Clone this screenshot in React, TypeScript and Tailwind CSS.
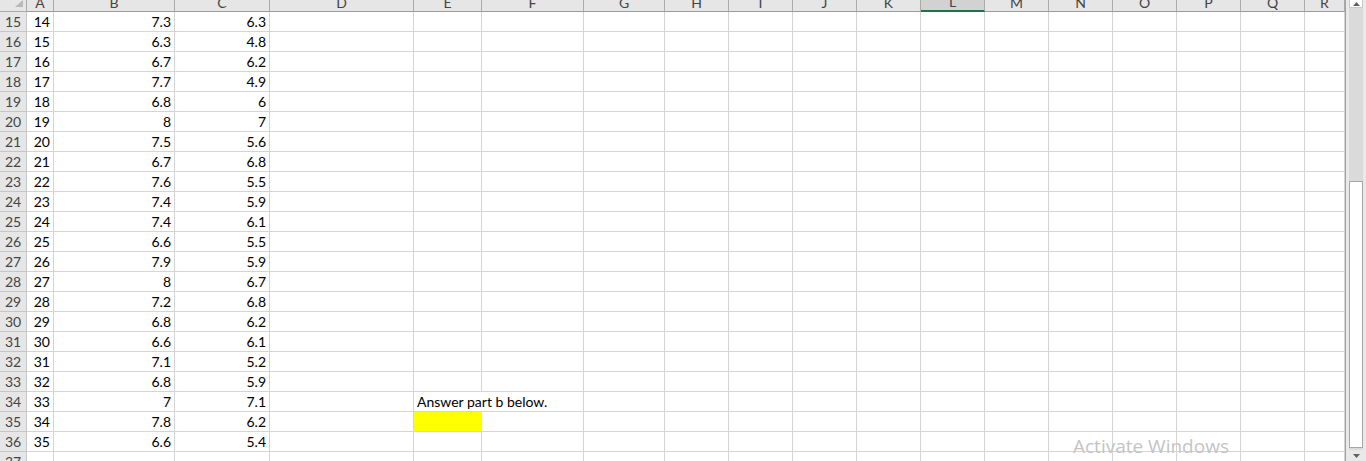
import React from "react";

const columns = [
	{ name: "A", w: "w-[27px]" },
	{ name: "B", w: "w-[121px]" },
	{ name: "C", w: "w-[95px]" },
	{ name: "D", w: "w-[144px]" },
	{ name: "E", w: "w-[68px]" },
	{ name: "F", w: "w-[102px]" },
	{ name: "G", w: "w-[81px]" },
	{ name: "H", w: "w-[64px]" },
	{ name: "I", w: "w-[64px]" },
	{ name: "J", w: "w-[64px]" },
	{ name: "K", w: "w-[64px]" },
	{ name: "L", w: "w-[64px]" },
	{ name: "M", w: "w-[64px]" },
	{ name: "N", w: "w-[64px]" },
	{ name: "O", w: "w-[64px]" },
	{ name: "P", w: "w-[64px]" },
	{ name: "Q", w: "w-[64px]" },
	{ name: "R", w: "w-[40px]" },
];

const data: [number, string, string][] = [
	[14, "7.3", "6.3"],
	[15, "6.3", "4.8"],
	[16, "6.7", "6.2"],
	[17, "7.7", "4.9"],
	[18, "6.8", "6"],
	[19, "8", "7"],
	[20, "7.5", "5.6"],
	[21, "6.7", "6.8"],
	[22, "7.6", "5.5"],
	[23, "7.4", "5.9"],
	[24, "7.4", "6.1"],
	[25, "6.6", "5.5"],
	[26, "7.9", "5.9"],
	[27, "8", "6.7"],
	[28, "7.2", "6.8"],
	[29, "6.8", "6.2"],
	[30, "6.6", "6.1"],
	[31, "7.1", "5.2"],
	[32, "6.8", "5.9"],
	[33, "7", "7.1"],
	[34, "7.8", "6.2"],
	[35, "6.6", "5.4"],
];

function Row({ num, vals }: { num: number; vals?: [number, string, string] }) {
	return (
		<div className="flex h-[20px] shrink-0">
			<div className="w-[27px] shrink-0 bg-[#e6e6e6] border-r border-b border-[#c6c6c6] text-[#444] text-center leading-[19px]">
				{num}
			</div>
			{columns.map((c, i) => {
				let content: React.ReactNode = null;
				let extra = "border-r";
				if (vals && i === 0) content = vals[0];
				if (vals && i === 1) content = vals[1];
				if (vals && i === 2) content = vals[2];
				if (num === 34 && c.name === "E") {
					content = "Answer part b below.";
					extra = "border-r-0 pl-[3px] whitespace-nowrap overflow-visible relative z-10 text-left";
				}
				if (num === 35 && c.name === "E") extra = "border-r-0 bg-[#ffff00]";
				return (
					<div
						key={c.name}
						className={`${c.w} shrink-0 border-b border-[#d4d4d4] ${extra} text-right pr-[3px] leading-[19px] text-black`}
					>
						{content}
					</div>
				);
			})}
		</div>
	);
}

export default function App() {
	return (
		<div
			className="relative w-[1366px] h-[461px] overflow-hidden bg-white flex text-[14px]"
			style={{ fontFamily: "Lato, 'Liberation Sans', sans-serif" }}
		>
			<div className="w-[1345px] shrink-0 flex flex-col">
				{/* column headers, top part scrolled out of view */}
				<div className="flex h-[12px] shrink-0">
					<div className="w-[27px] shrink-0 bg-[#e6e6e6] border-r border-b border-[#ababab] relative">
						<svg className="absolute left-[11px] top-0" width="12" height="8" viewBox="0 0 12 8">
							<polygon points="12,0 12,7 4,7" fill="#b8b8b8" />
						</svg>
					</div>
					{columns.map((c) => (
						<div
							key={c.name}
							className={`${c.w} shrink-0 flex items-end justify-center pb-[1px] overflow-hidden border-r border-[#ababab] text-[#444] leading-none ${
								c.name === "L"
									? "bg-[#d2d2d2] border-b-2 border-b-[#217346]"
									: "bg-[#e6e6e6] border-b border-b-[#9b9b9b]"
							}`}
						>
							{c.name}
						</div>
					))}
				</div>
				{data.map((d, i) => (
					<Row key={i} num={15 + i} vals={d} />
				))}
				<Row num={37} />
			</div>

			{/* vertical scrollbar */}
			<div className="w-[21px] shrink-0 bg-[#e9e9e9] flex flex-col px-[3px] border-l border-[#a0a0a0]">
				<div className="h-[8px] shrink-0 bg-white border border-t-0 border-[#c8c8c8] flex items-center justify-center">
					<svg width="7" height="4" viewBox="0 0 7 4">
						<polygon points="3.5,0 7,4 0,4" fill="#606060" />
					</svg>
				</div>
				<div className="flex-1 bg-[#dadada] pt-[173px]">
					<div className="h-[267px] bg-white border border-[#a6a6a6]" />
				</div>
				<div className="h-[11px] shrink-0 bg-[#e9e9e9] flex items-center justify-center">
					<svg width="7" height="4" viewBox="0 0 7 4">
						<polygon points="0,0 7,0 3.5,4" fill="#606060" />
					</svg>
				</div>
			</div>

			<div
				className="absolute left-[1073px] top-[437px] text-[19px] text-[#c4c4c4] leading-none pointer-events-none"
				style={{ fontFamily: "'Open Sans', sans-serif" }}
			>
				Activate Windows
			</div>
		</div>
	);
}
